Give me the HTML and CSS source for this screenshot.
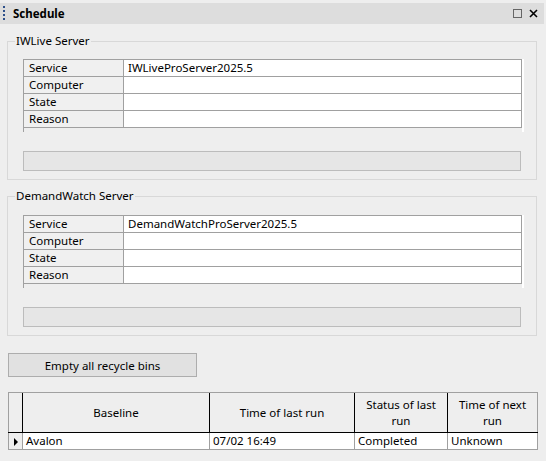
FILE: index.html
```html
<!DOCTYPE html>
<html>
<head>
<meta charset="utf-8">
<link rel="stylesheet" href="styles.css">
</head>
<body>
<div class="window">
  <div class="titlebar">
    <span class="grip"></span>
    <span class="title">Schedule</span>
    <span class="tb-icons">
      <svg class="ico" width="9" height="9" viewBox="0 0 9 9"><rect x="0.5" y="0.5" width="8" height="8" fill="none" stroke="#666" stroke-width="1"/></svg>
      <svg class="ico" width="9" height="9" viewBox="0 0 9 9"><path d="M1 1 L8 8 M8 1 L1 8" stroke="#000" stroke-width="1.6" fill="none"/></svg>
    </span>
  </div>
  <div class="content">
    <fieldset class="group">
      <legend>IWLive Server</legend>
      <div class="props">
        <table class="ptable">
          <tr><td class="lbl">Service</td><td class="val">IWLiveProServer2025.5</td></tr>
          <tr><td class="lbl">Computer</td><td class="val"></td></tr>
          <tr><td class="lbl">State</td><td class="val"></td></tr>
          <tr><td class="lbl">Reason</td><td class="val"></td></tr>
        </table>
      </div>
      <div class="progress"></div>
    </fieldset>
    <fieldset class="group second">
      <legend>DemandWatch Server</legend>
      <div class="props">
        <table class="ptable">
          <tr><td class="lbl">Service</td><td class="val">DemandWatchProServer2025.5</td></tr>
          <tr><td class="lbl">Computer</td><td class="val"></td></tr>
          <tr><td class="lbl">State</td><td class="val"></td></tr>
          <tr><td class="lbl">Reason</td><td class="val"></td></tr>
        </table>
      </div>
      <div class="progress"></div>
    </fieldset>
    <button class="btn">Empty all recycle bins</button>
    <table class="grid">
      <tr class="ghead">
        <th class="rh"></th>
        <th class="c1">Baseline</th>
        <th class="c2">Time of last run</th>
        <th class="c3">Status of last<br>run</th>
        <th class="c4">Time of next<br>run</th>
      </tr>
      <tr class="grow">
        <td class="rh"><span class="tri"></span></td>
        <td>Avalon</td>
        <td>07/02 16:49</td>
        <td>Completed</td>
        <td>Unknown</td>
      </tr>
    </table>
  </div>
</div>
</body>
</html>
```
FILE: styles.css
```css
html, body {
  margin: 0;
  padding: 0;
  background: #eeeeee;
}
body {
  font-family: "Noto Sans", "Open Sans", sans-serif;
  font-size: 11.5px;
  line-height: 16px;
  color: #000;
}
.window {
  width: 546px;
  height: 461px;
  padding-top: 3px;
  box-sizing: border-box;
}
.titlebar {
  height: 21px;
  background: #dddddd;
  display: flex;
  align-items: center;
  margin-right: 2px;
}
.grip {
  width: 2px;
  height: 16px;
  margin-left: 3px;
  background: repeating-linear-gradient(to bottom, #2c4f8a 0 2px, transparent 2px 4px);
}
.title {
  font-weight: bold;
  margin-left: 8px;
  font-size: 11.5px;
}
.tb-icons {
  margin-left: auto;
  display: flex;
  gap: 7px;
  margin-right: 6px;
  align-items: center;
}
.ico { display: block; }
.content {
  padding: 9px 9px 0 7px;
}
.group {
  margin: 0;
  border: 1px solid #d8d8d8;
  padding: 10px 12px 8px 15px;
  min-width: 0;
}
.group legend {
  padding: 0 1px;
  margin-left: -8px;
  line-height: 16px;
  height: 16px;
}
.group.second {
  margin-top: 8px;
  padding-top: 11px;
}
.props {
  border-left: 1px solid #a0a0a0;
  border-right: 2px solid #ffffff;
  padding-bottom: 4px;
  background: #eeeeee;
}
.ptable {
  border-collapse: collapse;
  width: 100%;
}
.ptable td {
  height: 16px;
  padding: 0;
  border: 1px solid #a0a0a0;
  line-height: 16px;
  white-space: nowrap;
}
.ptable tr td:first-child { border-left: none; }
.ptable .lbl {
  width: 94px;
  padding-left: 5px;
  background: #f0f0f0;
}
.ptable .val {
  background: #ffffff;
  padding-left: 4px;
}
.progress {
  margin-top: 19px;
  margin-right: 3px;
  height: 18px;
  border: 1px solid #bcbcbc;
  background: #e6e6e6;
}
.btn {
  display: block;
  margin-top: 17px;
  margin-left: 1px;
  width: 189px;
  height: 24px;
  font-family: inherit;
  font-size: 11.5px;
  color: #000;
  background: #e1e1e1;
  border: 1px solid #adadad;
  padding: 0;
}
.grid {
  margin-top: 15px;
  margin-left: 1px;
  border-collapse: collapse;
  width: 526px;
  table-layout: fixed;
}
.grid th {
  font-weight: normal;
  height: 39px;
  padding: 0;
  line-height: 16px;
  background: #eeeeee;
  border-left: 1px solid #000;
  border-top: 1px solid #a0a0a0;
  border-bottom: 1px solid #000;
  text-align: center;
}
.grid th.rh { width: 13px; border-left: 1px solid #a0a0a0; }
.grid th.c1 { width: 186px; }
.grid th.c2 { width: 144px; }
.grid th.c3 { width: 92px; }
.grid th.c4 { width: 89px; border-right: 1px solid #a0a0a0; }
.grid td {
  height: 16px;
  padding: 0 0 0 3px;
  line-height: 16px;
  background: #fff;
  border: 1px solid #a0a0a0;
  white-space: nowrap;
}
.grid td.rh {
  padding: 0;
  background: #eeeeee;
  text-align: center;
}
.tri {
  display: inline-block;
  width: 0;
  height: 0;
  border-top: 4px solid transparent;
  border-bottom: 4px solid transparent;
  border-left: 4px solid #000;
  vertical-align: middle;
  margin-left: 1px;
}
```
